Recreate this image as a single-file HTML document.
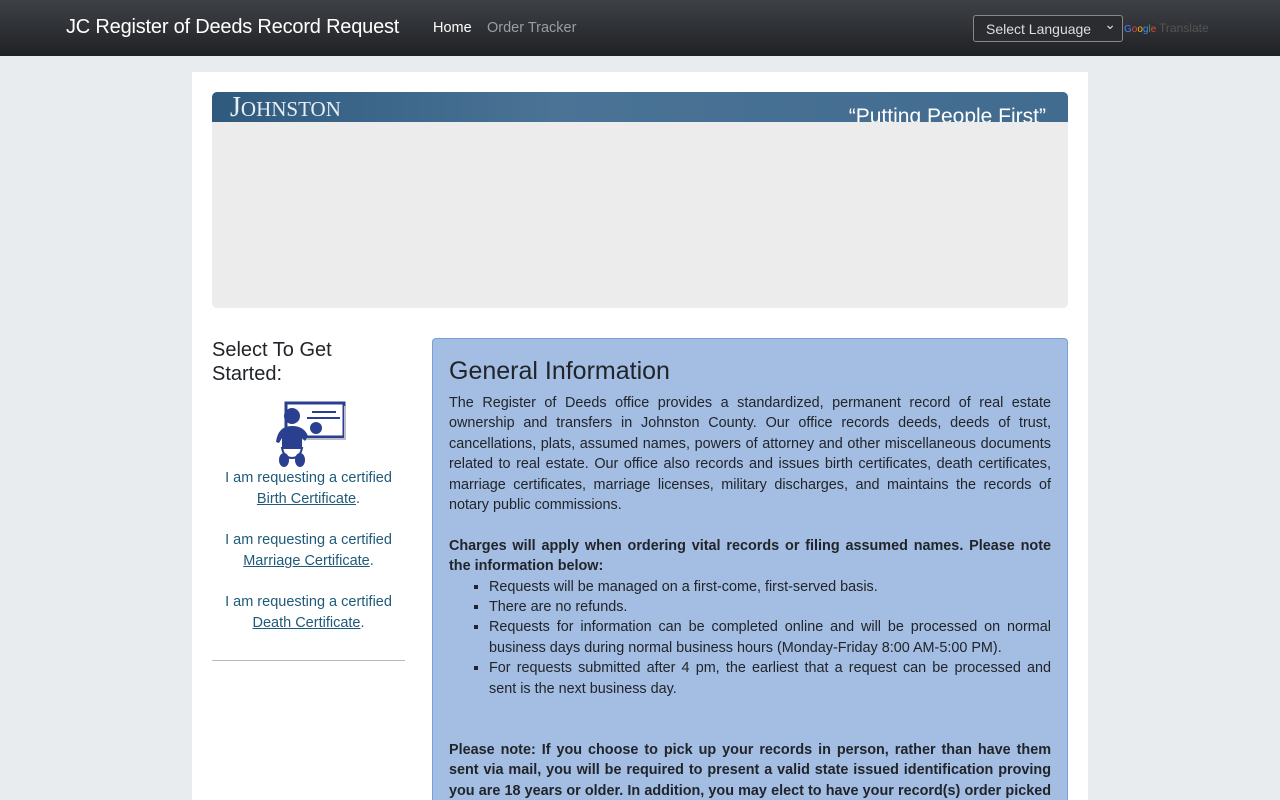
<!DOCTYPE html>
<html><head><meta charset="utf-8"><style>
*{box-sizing:border-box}
html,body{overflow:hidden;height:800px}
body{margin:0;background:#e9ecef;font-family:"Liberation Sans",sans-serif;color:#212529;width:1280px}
.nav{height:56px;background:linear-gradient(#3e4146,#1f2124);position:relative}
.brand{position:absolute;left:66px;top:16px;color:#fff;font-size:20px;letter-spacing:-0.2px}
.nl{position:absolute;top:20px;font-size:14.5px}
.sel{position:absolute;left:973px;top:15px;width:150px;height:27px;border:1px solid #888;border-radius:3px;background:#2a2c2f;color:#ddd;font-size:14px;padding:5px 12px}
.sel:after{content:"⌄";position:absolute;right:6px;top:0px;font-size:14px}
.gt{position:absolute;left:1124px;top:21px;font-size:10px}
.card{position:absolute;left:192px;top:72px;width:896px;height:728px;background:#fff}
.banner{position:absolute;left:20px;top:20px;width:856px;height:216px;background:#ececec;border-radius:5px;overflow:hidden}
.bb{height:30px;background:linear-gradient(90deg,#2f5a7e,#4a7396 40%,#416b8f);position:relative;overflow:hidden}
.side{position:absolute;left:20px;top:266px;width:193px}
.side h3{font-weight:normal;font-size:20px;margin:0;line-height:24px}
.side p{text-align:center;color:#1f5a7a;font-size:14.5px;line-height:21px;margin:0 0 20px}
.side a{color:#1f5a7a;text-decoration:underline}
.info{position:absolute;left:240px;top:266px;width:636px;height:462px;background:#a3bde3;border:1px solid #7a9ed6;border-bottom:0;border-radius:4px 4px 0 0;padding:17px 16px;font-size:14.4px;line-height:20.4px;overflow:hidden}
.info h2{font-weight:normal;font-size:25px;margin:0 0 7px;line-height:30px}
.info p{margin:0;text-align:justify}
ul{margin:0;padding-left:40px;list-style:square;text-align:justify}
</style></head><body>
<div class="nav">
<div class="brand">JC Register of Deeds Record Request</div>
<div class="nl" style="left:433px;color:#fff">Home</div>
<div class="nl" style="left:487px;color:#9a9da1">Order Tracker</div>
<div class="sel">Select Language</div>
<div class="gt"><span style="color:#4285f4">G</span><span style="color:#ea4335">o</span><span style="color:#fbbc05">o</span><span style="color:#4285f4">g</span><span style="color:#34a853">l</span><span style="color:#ea4335">e</span> <span style="color:#555;font-size:12px">Translate</span></div>
</div>
<div class="card">
<div class="banner"><div class="bb">
<div style="position:absolute;left:18px;top:0px;color:#e8eef3;font-family:'Liberation Serif',serif;font-size:28px">J<span style="font-size:21px">OHNSTON</span></div>
<div style="position:absolute;right:22px;top:13px;color:#fff;font-size:21px">“Putting People First”</div>
</div></div>
<div class="side">
<h3>Select To Get Started:</h3>
<svg width="193" height="68" viewBox="0 0 193 68" style="margin-top:14px;display:block">
<rect x="74" y="3" width="58" height="34" fill="#fff" stroke="#2a3f8f" stroke-width="3"/>
<line x1="133" y1="6" x2="133" y2="40" stroke="#bbc" stroke-width="2"/>
<line x1="77" y1="39" x2="133" y2="39" stroke="#bbc" stroke-width="2"/>
<line x1="100" y1="12" x2="124" y2="12" stroke="#2a3f8f" stroke-width="2"/>
<line x1="95" y1="18" x2="128" y2="18" stroke="#2a3f8f" stroke-width="2"/>
<circle cx="104" cy="28" r="6" fill="#2a3f8f"/>
<circle cx="80" cy="16" r="8" fill="#2a3f8f"/>
<path d="M64 42 Q66 26 80 26 Q92 26 96 36 L93 41 L90 38 L90 48 L70 48 L70 38 L67 43Z" fill="#2a3f8f"/>
<path d="M70 48 L90 48 Q88 58 80 58 Q72 58 70 48Z" fill="#fff" stroke="#2a3f8f" stroke-width="2"/>
<ellipse cx="72" cy="60" rx="5" ry="7" fill="#2a3f8f"/><ellipse cx="88" cy="60" rx="5" ry="7" fill="#2a3f8f"/>
</svg>
<p>I am requesting a certified<br><a>Birth Certificate</a>.</p>
<p>I am requesting a certified<br><a>Marriage Certificate</a>.</p>
<p>I am requesting a certified<br><a>Death Certificate</a>.</p>
<hr style="border:0;border-top:1px solid #bbb;margin:26px 0 0">
</div>
<div class="info">
<h2>General Information</h2>
<p>The Register of Deeds office provides a standardized, permanent record of real estate ownership and transfers in Johnston County. Our office records deeds, deeds of trust, cancellations, plats, assumed names, powers of attorney and other miscellaneous documents related to real estate. Our office also records and issues birth certificates, death certificates, marriage certificates, marriage licenses, military discharges, and maintains the records of notary public commissions.</p>
<br>
<p><b>Charges will apply when ordering vital records or filing assumed names. Please note the information below:</b></p>
<ul>
<li>Requests will be managed on a first-come, first-served basis.</li>
<li>There are no refunds.</li>
<li>Requests for information can be completed online and will be processed on normal business days during normal business hours (Monday-Friday 8:00 AM-5:00 PM).</li>
<li>For requests submitted after 4 pm, the earliest that a request can be processed and sent is the next business day.</li>
</ul>
<br><br>
<p><b>Please note: If you choose to pick up your records in person, rather than have them sent via mail, you will be required to present a valid state issued identification proving you are 18 years or older. In addition, you may elect to have your record(s) order picked up by the following:</b></p>
</div>
</div>
</body></html>
